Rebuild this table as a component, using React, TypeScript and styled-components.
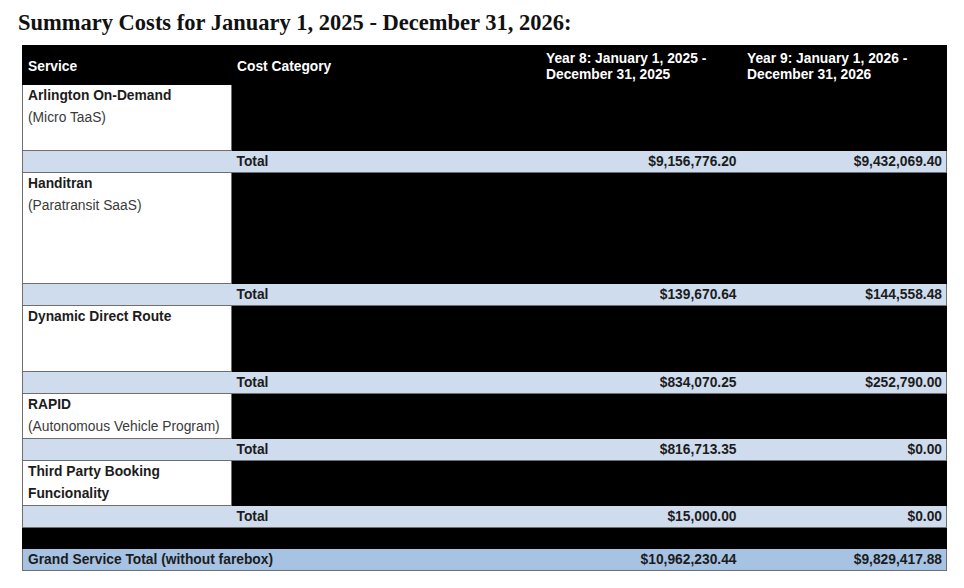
import React from 'react';
import styled, { createGlobalStyle } from 'styled-components';

const GlobalStyle = createGlobalStyle`
  html, body {
    margin: 0;
    padding: 0;
    background: #ffffff;
  }
`;

type Service = {
  name: string;
  note?: string;
  height: number;
  year8: string;
  year9: string;
};

const services: Service[] = [
  { name: 'Arlington On-Demand', note: '(Micro TaaS)', height: 66, year8: '$9,156,776.20', year9: '$9,432,069.40' },
  { name: 'Handitran', note: '(Paratransit SaaS)', height: 111, year8: '$139,670.64', year9: '$144,558.48' },
  { name: 'Dynamic Direct Route', height: 66, year8: '$834,070.25', year9: '$252,790.00' },
  { name: 'RAPID', note: '(Autonomous Vehicle Program)', height: 44, year8: '$816,713.35', year9: '$0.00' },
  { name: 'Third Party Booking Funcionality', height: 45, year8: '$15,000.00', year9: '$0.00' },
];

export default function App() {
  return (
    <Page>
      <GlobalStyle />
      <Title>Summary Costs for January 1, 2025 - December 31, 2026:</Title>
      <Table>
        <colgroup>
          <col style={{ width: 209 }} />
          <col style={{ width: 308 }} />
          <col style={{ width: 201 }} />
          <col style={{ width: 206 }} />
        </colgroup>
        <thead>
          <tr>
            <HeadCell>Service</HeadCell>
            <HeadCell>Cost Category</HeadCell>
            <HeadCell>Year 8: January 1, 2025 -<br />December 31, 2025</HeadCell>
            <HeadCell>Year 9: January 1, 2026 -<br />December 31, 2026</HeadCell>
          </tr>
        </thead>
        <tbody>
          {services.map((s) => (
            <React.Fragment key={s.name}>
              <tr>
                <ServiceCell $height={s.height}>
                  <ServiceName>{s.name}</ServiceName>
                  {s.note && <ServiceNote>{s.note}</ServiceNote>}
                </ServiceCell>
                <Redacted colSpan={3} />
              </tr>
              <TotalRow>
                <TotalCell />
                <TotalCell>Total</TotalCell>
                <AmountCell>{s.year8}</AmountCell>
                <AmountCell>{s.year9}</AmountCell>
              </TotalRow>
            </React.Fragment>
          ))}
          <tr>
            <Redacted colSpan={4} $height={20} />
          </tr>
          <GrandRow>
            <TotalCell colSpan={2}>Grand Service Total (without farebox)</TotalCell>
            <AmountCell>$10,962,230.44</AmountCell>
            <AmountCell>$9,829,417.88</AmountCell>
          </GrandRow>
        </tbody>
      </Table>
    </Page>
  );
}

const Page = styled.div`
  padding: 10px 0 0 18px;
  width: 964px;
  height: 588px;
  box-sizing: border-box;
  font-family: 'Liberation Sans', Arial, sans-serif;
  color: #1c1c1c;
`;

const Title = styled.h1`
  margin: 0 0 9px 0;
  font-family: 'Liberation Serif', 'Times New Roman', serif;
  font-weight: bold;
  font-size: 22.5px;
  line-height: 26px;
  color: #111111;
`;

const Table = styled.table`
  margin-left: 4px;
  border-collapse: collapse;
  table-layout: fixed;
  width: 924px;
  font-size: 13.8px;
`;

const HeadCell = styled.th`
  height: 35px;
  padding: 3px 5px 0;
  background: #000000;
  color: #ffffff;
  text-align: left;
  vertical-align: middle;
  font-weight: bold;
  line-height: 16px;
  border: 1px solid #000000;
  &:nth-child(n + 3) {
    padding-left: 6px;
  }
`;

const ServiceCell = styled.td<{ $height: number }>`
  height: ${(p) => p.$height}px;
  padding: 0 5px;
  vertical-align: top;
  background: #ffffff;
  border: 1px solid #6f6f6f;
  box-sizing: border-box;
`;

const ServiceName = styled.div`
  font-weight: bold;
  line-height: 22px;
`;

const ServiceNote = styled.div`
  color: #3a3a3a;
  line-height: 22px;
`;

const Redacted = styled.td<{ $height?: number }>`
  background: #000000;
  padding: 0;
  border: 1px solid #000000;
  ${(p) => (p.$height ? `height: ${p.$height}px;` : '')}
`;

const TotalRow = styled.tr`
  background: #cfdcee;
`;

const GrandRow = styled.tr`
  background: #a7c3e3;
`;

const TotalCell = styled.td`
  height: 21px;
  padding: 0 5px;
  font-weight: bold;
  border-top: 1px solid #6f6f6f;
  border-bottom: 1px solid #6f6f6f;
  &:first-child {
    border-left: 1px solid #6f6f6f;
  }
`;

const AmountCell = styled.td`
  height: 21px;
  padding: 0 4px;
  font-weight: bold;
  text-align: right;
  border-top: 1px solid #6f6f6f;
  border-bottom: 1px solid #6f6f6f;
  &:last-child {
    border-right: 1px solid #6f6f6f;
  }
`;
